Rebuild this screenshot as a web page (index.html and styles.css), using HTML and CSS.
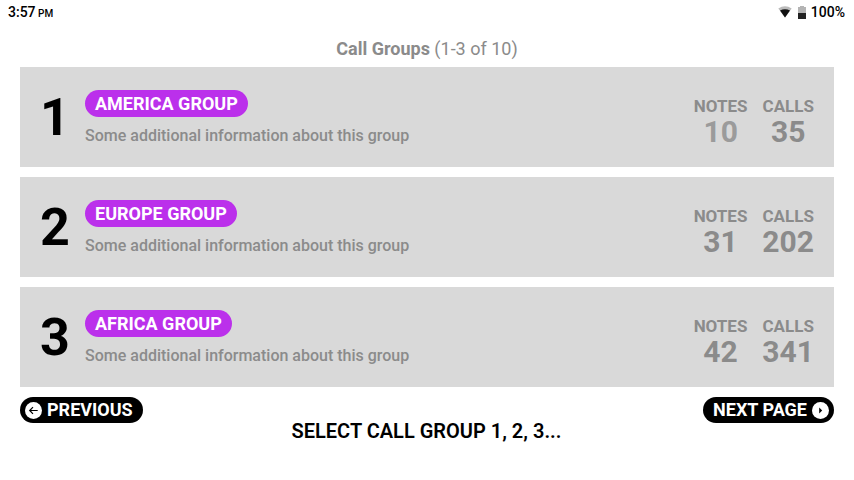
FILE: index.html
```html
<!DOCTYPE html>
<html lang="en">
<head>
<meta charset="utf-8">
<title>Call Groups</title>
<link rel="stylesheet" href="styles.css">
</head>
<body>
<header class="status">
  <div class="time">3:57 <small>PM</small></div>
  <div class="battery">
    <svg class="wifi" width="14" height="12" viewBox="0 0 14 12"><path d="M0.300 2.500Q7-2 13.700 2.500L7 11.500Z" fill="#bbb"/><path d="M2 4.600Q7 1.800 12 4.600L7 11.500Z" fill="#111"/></svg>
    <svg class="cell" width="8" height="13" viewBox="0 0 8 13"><path d="M2 0h4v1h2v12H0V1h2z" fill="#b4b4b4"/><path d="M0 7h8v6H0z" fill="#222"/></svg>
    <span>100%</span>
  </div>
</header>
<main>
  <h1><b>Call Groups</b> (1-3 of 10)</h1>
  <ol class="groups">
    <li class="card"><span class="num">1</span><div class="info"><span class="tag">AMERICA GROUP</span><p>Some additional information about this group</p></div><div class="stat light"><span>NOTES</span><strong>10</strong></div><div class="stat"><span>CALLS</span><strong>35</strong></div></li>
    <li class="card"><span class="num">2</span><div class="info"><span class="tag">EUROPE GROUP</span><p>Some additional information about this group</p></div><div class="stat"><span>NOTES</span><strong>31</strong></div><div class="stat"><span>CALLS</span><strong>202</strong></div></li>
    <li class="card"><span class="num">3</span><div class="info"><span class="tag">AFRICA GROUP</span><p>Some additional information about this group</p></div><div class="stat"><span>NOTES</span><strong>42</strong></div><div class="stat"><span>CALLS</span><strong>341</strong></div></li>
  </ol>
  <nav>
    <button class="prev"><svg width="17" height="17" viewBox="0 0 17 17"><circle cx="8.500" cy="8.500" r="8.500" fill="#fff"/><path d="M12.700 8.500H4.700M8 5.200L4.700 8.500L8 11.800" fill="none" stroke="#000" stroke-width="1.200"/></svg>PREVIOUS</button>
    <button class="next">NEXT PAGE<svg width="17" height="17" viewBox="0 0 17 17"><circle cx="8.500" cy="8.500" r="8.500" fill="#fff"/><path d="M7.200 5.500L10.200 8.500L7.200 11.500z" fill="#000"/></svg></button>
  </nav>
  <p class="prompt">SELECT CALL GROUP 1, 2, 3...</p>
</main>
</body>
</html>
```
FILE: styles.css
```css
* { box-sizing: border-box; }
body { margin: 0; background: #fff; color: #000; font-family: Roboto, sans-serif; font-weight: 500; height: 480px; overflow: hidden; }
.status { display: flex; justify-content: space-between; height: 24px; padding: 0 9px 0 8px; font-size: 14px; line-height: 24px; }
.time small { font-size: 10px; margin-left: -1px; }
.battery { display: flex; align-items: center; }
.wifi { margin-right: 6px; }
.cell { margin-right: 5px; }
main { padding: 0 20px; }
h1 { margin: 14px 0 8px; font-size: 18px; line-height: 21px; font-weight: 400; text-align: center; color: #8b8b8b; }
h1 b { font-weight: 700; }
.groups { list-style: none; margin: 0; padding: 0; display: grid; gap: 10px; }
.card { height: 100px; background: #d9d9d9; display: flex; padding: 0 20px; color: #8b8b8b; }
.num { width: 45px; font-size: 52px; line-height: 102px; font-weight: 700; color: #000; }
.info { flex: 1; padding-top: 23px; }
.tag { display: inline-block; height: 27px; line-height: 27px; padding: 0 10px; border-radius: 14px; background: #bb30eb; color: #fff; font-size: 18px; font-weight: 700; }
.info p { margin: 9px 0 0; font-size: 16px; line-height: 20px; }
.stat { display: flex; flex-direction: column; align-items: center; padding-top: 29px; margin-left: 15px; }
.stat span { font-size: 17px; line-height: 20px; font-weight: 700; }
.stat strong { font-size: 30px; line-height: 32px; font-weight: 700; }
.light strong { color: #9b9b9b; }
nav { display: flex; justify-content: space-between; margin-top: 10px; }
button { height: 26px; border: 0; border-radius: 13px; background: #000; color: #fff; font: 700 18px/26px Roboto, sans-serif; display: flex; align-items: center; gap: 5px; }
.prev { padding: 0 10px 0 5px; }
.next { padding: 0 5px 0 10px; }
.prompt { margin: -3px 1px 0 0; text-align: center; font-size: 20px; line-height: 23px; font-weight: 600; }
```
